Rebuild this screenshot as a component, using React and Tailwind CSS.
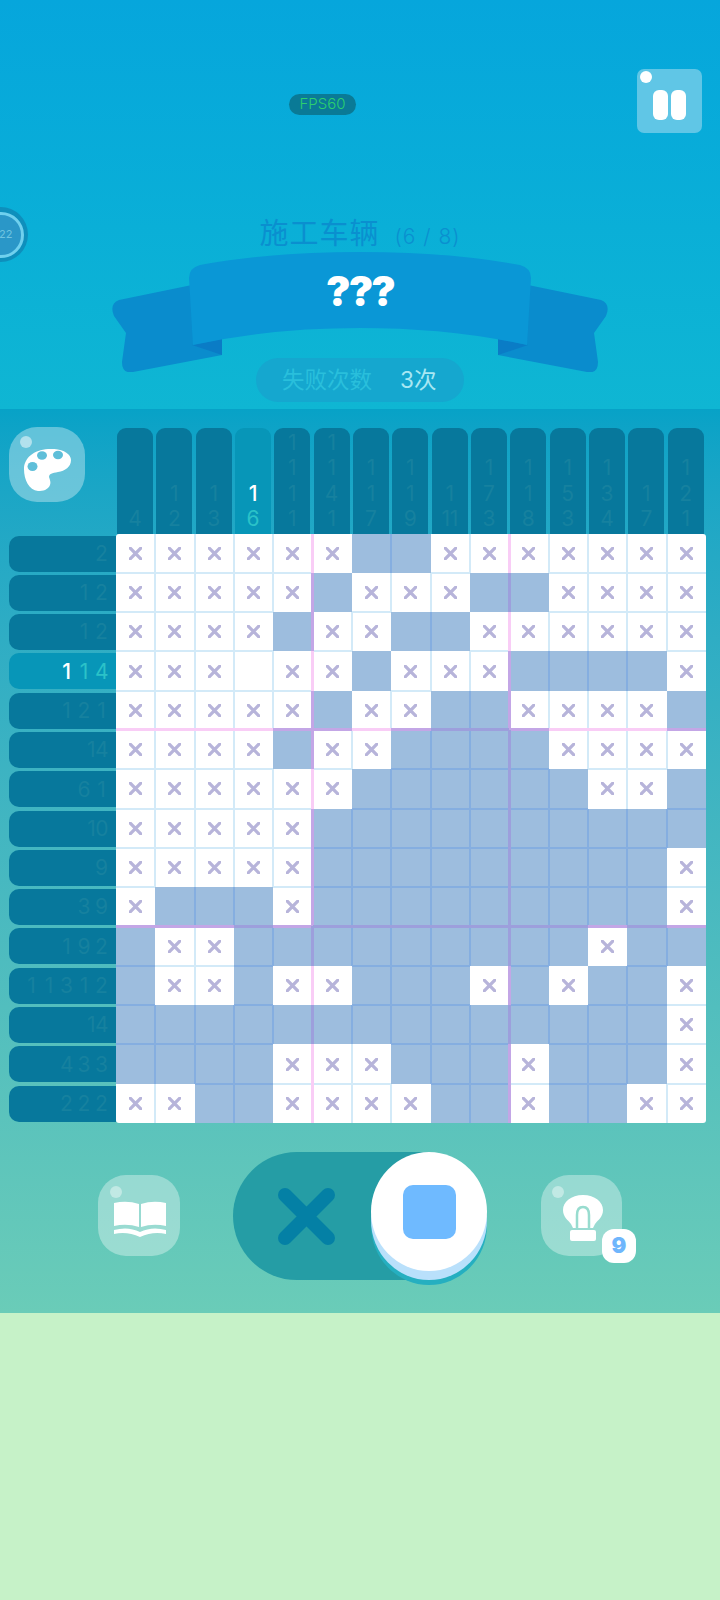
import React from "react";

const board = [
  "xxxxxxFFxxxxxxx",
  "xxxxxFxxxFFxxxx",
  "xxxxFxxFFxxxxxx",
  "xxx_xxFxxxFFFFx",
  "xxxxxFxxFFxxxxF",
  "xxxxFxxFFFFxxxx",
  "xxxxxxFFFFFFxxF",
  "xxxxxFFFFFFFFFF",
  "xxxxxFFFFFFFFFx",
  "xFFFxFFFFFFFFFx",
  "FxxFFFFFFFFFxFF",
  "FxxFxxFFFxFxFFx",
  "FFFFFFFFFFFFFFx",
  "FFFFxxxFFFxFFFx",
  "xxFFxxxxFFxFFxx",
];
const colClues = [[4],[1,2],[1,3],[1,6],[1,1,1,1],[1,1,4,1],[1,1,7],[1,1,9],[1,11],[1,7,3],[1,1,8],[1,5,3],[1,3,4],[1,7],[1,2,1]];
const rowClues = [[2],[1,2],[1,2],[1,1,4],[1,2,1],[14],[6,1],[10],[9],[3,9],[1,9,2],[1,1,3,1,2],[14],[4,3,3],[2,2,2]];

function lineColor(a, b, major) {
  const fa = a === "F";
  const fb = b === "F";
  if (major) {
    if (fa && fb) return "bg-[#9d9fdc]";
    if (!fa && !fb) return "bg-[#f9cdf6]";
    return "bg-[#c3a6e6]";
  }
  if (fa && fb) return "bg-[#85aee0]";
  if (!fa && !fb) return "bg-[#d3eaf8]";
  return "bg-transparent";
}

function Cell({ v, r, c }) {
  const right = c < 14 ? board[r][c + 1] : null;
  const below = r < 14 ? board[r + 1][c] : null;
  const vMajor = c === 4 || c === 9;
  const hMajor = r === 4 || r === 9;
  return (
    <div className={`relative flex items-center justify-center ${v === "F" ? "bg-[#9dbdde]" : "bg-white"}`}>
      {v === "x" && (
        <svg width="13" height="13" viewBox="0 0 13 13" className="block">
          <path d="M1.2 1.2 L11.8 11.8 M11.8 1.2 L1.2 11.8" stroke="#b7b4da" strokeWidth="3.3" strokeLinecap="round" />
        </svg>
      )}
      {right && (
        <div className={`absolute top-0 bottom-0 ${vMajor ? "right-[-1.5px] w-[3px] z-20" : "right-[-1px] w-[2px] z-10"} ${lineColor(v, right, vMajor)}`} />
      )}
      {below && (
        <div className={`absolute left-0 right-0 ${hMajor ? "bottom-[-1.5px] h-[3px] z-20" : "bottom-[-1px] h-[2px] z-10"} ${lineColor(v, below, hMajor)}`} />
      )}
    </div>
  );
}

function Bubble({ className, dot, children }) {
  return (
    <div className={`relative rounded-[28px] bg-white/35 ${className}`}>
      <div className={`absolute w-[12px] h-[12px] rounded-full ${dot}`} />
      {children}
    </div>
  );
}

export default function App() {
  return (
    <div className="relative w-[720px] h-[1600px] overflow-hidden bg-[#c6f2c8] [font-family:Inter,'Noto_Sans_CJK_SC',sans-serif]">
      {/* top area */}
      <div className="relative h-[409px] bg-gradient-to-b from-[#06a6dc] to-[#0fb6d3] flex flex-col">
        <div className="flex items-start pt-[69px] h-[218px]">
          <div className="ml-[289px] mt-[25px] w-[67px] h-[21px] rounded-full bg-[#0a7a96] flex items-center justify-center text-[15px] font-light text-[#2bd06e]">
            FPS60
          </div>
          <div className="relative ml-auto mr-[18px] w-[65px] h-[64px] rounded-[7px] bg-[#60c6e6] flex items-center justify-center gap-[3px] pt-[8px]">
            <div className="absolute left-[3px] top-[2px] w-[12px] h-[12px] rounded-full bg-white" />
            <div className="w-[15px] h-[30px] rounded-[6px] bg-white" />
            <div className="w-[15px] h-[30px] rounded-[6px] bg-white" />
          </div>
        </div>

        <div className="flex justify-center items-baseline h-[34px] text-[#0a8fcf]">
          <span className="text-[29px] leading-[32px] font-normal tracking-[1px]">施工车辆</span>
          <span className="ml-[15px] text-[21px] leading-[32px] font-light tracking-[1px]">(6 / 8)</span>
        </div>

        <div className="relative h-[120px] flex justify-center items-start">
          <svg width="720" height="120" viewBox="0 252 720 120" className="absolute left-0 top-0 block">
            <path d="M192 285 L119 300 Q109 304 114 316 L126 333 L122 362 Q122 374 133 372 L222 355 L222 330 L192 330Z" fill="#0a8ccd" />
            <path d="M528 285 L601 300 Q611 304 606 316 L594 333 L598 362 Q598 374 587 372 L498 355 L498 330 L528 330Z" fill="#0a8ccd" />
            <path d="M192 345 L222 339 L222 355Z" fill="#0a7cc6" />
            <path d="M528 345 L498 339 L498 355Z" fill="#0a7cc6" />
            <path d="M189 278 Q189 268 200 265 Q270 252 360 252 Q450 252 520 265 Q531 268 531 278 L527 345 Q450 328 360 328 Q270 328 193 345Z" fill="#0a97d6" />
          </svg>
          <span className="relative mt-[17px] text-[41px] leading-[44px] font-black text-white tracking-[-2px]">???</span>
        </div>

        <div className="mt-[-14px] self-center relative w-[208px] h-[44px] rounded-[22px] bg-[#15a7cf] flex items-center pl-[26px] text-[22.5px]">
          <span className="text-[#29bfdc]">失败次数</span>
          <span className="ml-[28px] text-[#a8e7f3]">3次</span>
        </div>

        {/* timer */}
        <div className="absolute left-[-27px] top-[207px] w-[55px] h-[55px] rounded-full bg-[#0e8fbc] flex items-center justify-center">
          <div className="w-[46px] h-[46px] rounded-full border-[3px] border-[#6fd0ee] bg-[#2a97c8] flex items-center justify-end pr-[8px] text-[11px] text-[#6fc4e0]">
            22
          </div>
        </div>
      </div>

      {/* play panel */}
      <div className="h-[904px] bg-gradient-to-b from-[#07a2c7] to-[#6accb8]">
        <div className="flex">
          <div className="w-[116px]">
            <div className="h-[124.5px] pt-[18px] pl-[9px]">
              <Bubble className="w-[76px] h-[75px]" dot="left-[11px] top-[9px] bg-white/50">
                <svg width="47" height="42" viewBox="0 0 47 42" className="absolute left-[15px] top-[22px]">
                  <path d="M0 20 C0 9 10 1 24 0 C37 -1 47 4 47 11 C47 18 41 22 34 23 C28 24 25 25 25 28 C26 31 27 33 26 36 C24 41 19 42 14 42 C5 41 0 31 0 20Z" fill="#fff" />
                  <ellipse cx="18" cy="6.5" rx="5" ry="4.2" fill="#5fbfd9" />
                  <ellipse cx="34" cy="6" rx="5" ry="4.2" fill="#5fbfd9" />
                  <ellipse cx="8.5" cy="17.5" rx="5" ry="4.5" fill="#5fbfd9" />
                </svg>
              </Bubble>
            </div>
            <div className="grid grid-rows-[repeat(15,1fr)] h-[589.5px] pl-[9px]">
              {rowClues.map((clue, r) => (
                <div key={r} className="pt-[2px]">
                  <div className={`h-[36px] rounded-l-[10px] flex items-center justify-end gap-[4.5px] pr-[8px] text-[21px] ${r === 3 ? "bg-[#0796b8] text-[#2bc2c8]" : "bg-[#07789c] text-[#16819f]"}`}>
                    {clue.map((n, i) => (
                      <span key={i} className={`text-center ${n > 9 ? "tracking-[-0.5px]" : "w-[13px]"} ${r === 3 && i === 0 ? "text-white font-medium" : ""}`}>
                        {n}
                      </span>
                    ))}
                  </div>
                </div>
              ))}
            </div>
          </div>

          <div className="w-[590px]">
            <div className="grid grid-cols-[repeat(15,1fr)] h-[124.5px] items-end">
              {colClues.map((clue, c) => (
                <div key={c} className={`ml-[1px] w-[36px] h-[106px] rounded-t-[9px] flex flex-col items-center justify-end pb-[2px] text-[21px] leading-[25.5px] ${c === 3 ? "bg-[#0796b8] text-[#2bc2c8]" : "bg-[#07789c] text-[#16819f]"}`}>
                  {clue.map((n, i) => (
                    <span key={i} className={`${n > 9 ? "tracking-[-0.5px]" : ""} ${c === 3 && i === 0 ? "text-white font-medium" : ""}`}>
                      {n}
                    </span>
                  ))}
                </div>
              ))}
            </div>
            <div className="grid grid-cols-[repeat(15,1fr)] grid-rows-[repeat(15,1fr)] h-[589.5px] rounded-[3px] overflow-hidden">
              {board.map((row, r) =>
                row.split("").map((v, c) => <Cell key={`${r}-${c}`} v={v} r={r} c={c} />)
              )}
            </div>
          </div>
        </div>

        {/* controls */}
        <div className="flex items-center h-[128px] mt-[29px] pl-[98px]">
          <Bubble className="w-[82px] h-[81px] mb-[2px]" dot="left-[12px] top-[11px] bg-white/40">
            <svg width="54" height="36" viewBox="0 0 54 36" className="absolute left-[15px] top-[26px]">
              <path d="M1 2 Q14 -1 26 3 L26 26 Q14 22 1 25Z" fill="#fff" />
              <path d="M53 2 Q40 -1 28 3 L28 26 Q40 22 53 25Z" fill="#fff" />
              <path d="M1 29 Q15 25 27 31 Q39 25 53 29 L53 33 Q40 30 27 36 Q14 30 1 33Z" fill="#fff" />
            </svg>
          </Bubble>

          <div className="relative ml-[52px] w-[254px] h-[128px] rounded-full bg-[#259da5] flex items-center pl-[45px] translate-x-[1px]">
            <svg width="57" height="57" viewBox="0 0 57 57" className="block">
              <path d="M7 7 L50 50 M50 7 L7 50" stroke="#0480a5" strokeWidth="14" strokeLinecap="round" />
            </svg>
            <div className="absolute right-0 top-0 w-[116px] h-[119px] rounded-[50%] bg-white shadow-[0_9px_0_#b9e0fb,0_14px_0_#25afc0] flex items-center justify-center">
              <div className="w-[53px] h-[54px] rounded-[10px] bg-[#6fbaff]" />
            </div>
          </div>

          <Bubble className="ml-[55px] w-[81px] h-[81px] mb-[2px]" dot="left-[11px] top-[11px] bg-white/40">
            <svg width="40" height="46" viewBox="0 0 40 46" className="absolute left-[22px] top-[20px]">
              <path d="M20 0 C8 0 0 7 0 15 C0 22 5 25 8 29 L10 33 L30 33 L32 29 C35 25 40 22 40 15 C40 7 32 0 20 0Z" fill="#fff" />
              <path d="M14 33 L14 20 Q14 12 20 12 Q26 12 26 20 L26 33" fill="none" stroke="#98dccf" strokeWidth="2.5" />
              <rect x="7" y="35" width="26" height="11" rx="2" fill="#fff" />
            </svg>
            <div className="absolute left-[61px] top-[54px] w-[34px] h-[34px] rounded-[12px] bg-white flex items-center justify-center text-[22px] font-black text-[#6fb6fc]">
              9
            </div>
          </Bubble>
        </div>
      </div>
    </div>
  );
}
